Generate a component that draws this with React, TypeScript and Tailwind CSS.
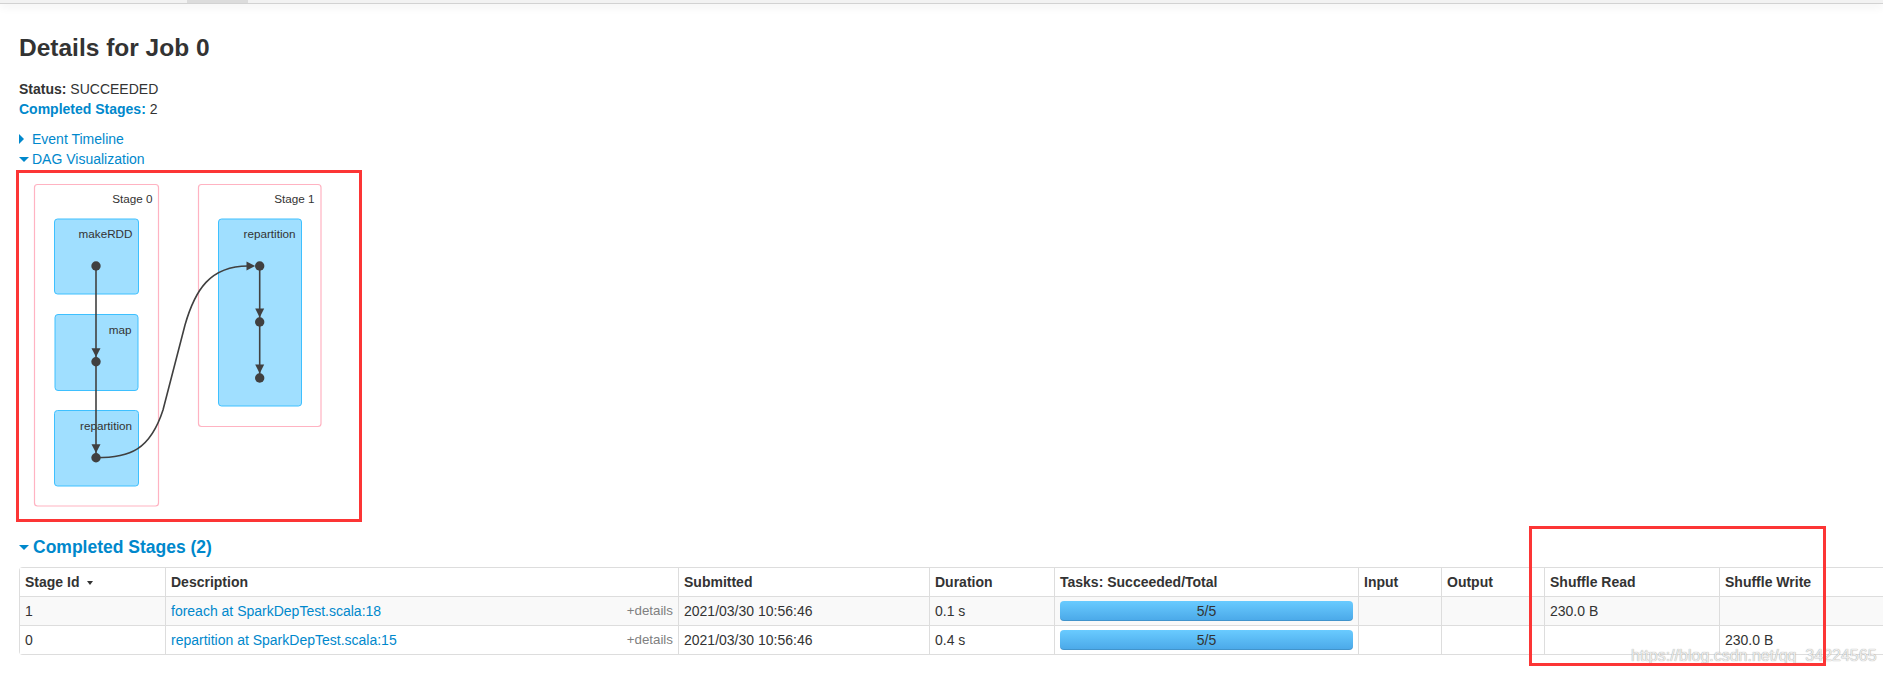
import React from "react";

function DownArrowHead({ x, y }: { x: number; y: number }) {
  // tip at dot edge, pointing down
  return <polygon points={`${x - 4.5},${y - 13.5} ${x + 4.5},${y - 13.5} ${x},${y - 4.6}`} fill="#404040" />;
}

function Dag() {
  const dot = "#404040";
  return (
    <svg width={340} height={346} viewBox="19 173 340 346" className="block">
      {/* stages */}
      <rect x={34.5} y={184.5} width={124} height={321.5} rx={3} fill="#ffffff" stroke="#ffb3c2" strokeWidth={1.2} />
      <text x={152.5} y={203} textAnchor="end" fontSize={11.7} fill="#333" fontFamily="'Liberation Sans', Arial, sans-serif">
        Stage 0
      </text>
      <rect x={198.5} y={184.5} width={122.5} height={242} rx={3} fill="#ffffff" stroke="#ffb3c2" strokeWidth={1.2} />
      <text x={314.5} y={203} textAnchor="end" fontSize={11.7} fill="#333" fontFamily="'Liberation Sans', Arial, sans-serif">
        Stage 1
      </text>

      {/* rdd clusters */}
      <rect x={54.5} y={219} width={84} height={75} rx={3} fill="#a0dfff" stroke="#3ec0ff" strokeWidth={1} />
      <text x={132.5} y={237.7} textAnchor="end" fontSize={11.7} fill="#333" fontFamily="'Liberation Sans', Arial, sans-serif">
        makeRDD
      </text>
      <rect x={55} y={314.5} width={83} height={76} rx={3} fill="#a0dfff" stroke="#3ec0ff" strokeWidth={1} />
      <text x={131.5} y={334} textAnchor="end" fontSize={11.7} fill="#333" fontFamily="'Liberation Sans', Arial, sans-serif">
        map
      </text>
      <rect x={54.5} y={410.5} width={84} height={75.5} rx={3} fill="#a0dfff" stroke="#3ec0ff" strokeWidth={1} />
      <text x={132} y={430} textAnchor="end" fontSize={11.7} fill="#333" fontFamily="'Liberation Sans', Arial, sans-serif">
        repartition
      </text>
      <rect x={218.5} y={219} width={83} height={187} rx={3} fill="#a0dfff" stroke="#3ec0ff" strokeWidth={1} />
      <text x={295.5} y={237.7} textAnchor="end" fontSize={11.7} fill="#333" fontFamily="'Liberation Sans', Arial, sans-serif">
        repartition
      </text>

      {/* edges */}
      <line x1={96} y1={266} x2={96} y2={457.7} stroke="#404040" strokeWidth={1.6} />
      <line x1={259.7} y1={266} x2={259.7} y2={378} stroke="#404040" strokeWidth={1.6} />
      <path
        d="M96,457.7 C130,457.7 150,450 163,410 L185,325 C195,290 210,266 248,266"
        fill="none"
        stroke="#404040"
        strokeWidth={1.6}
      />
      <polygon points="246.5,261.5 246.5,270.5 255.2,266" fill="#404040" />
      <DownArrowHead x={96} y={361.7} />
      <DownArrowHead x={96} y={457.7} />
      <DownArrowHead x={259.7} y={322} />
      <DownArrowHead x={259.7} y={378} />

      {/* nodes */}
      <circle cx={96} cy={266} r={4.7} fill={dot} />
      <circle cx={96} cy={361.7} r={4.7} fill={dot} />
      <circle cx={96} cy={457.7} r={4.7} fill={dot} />
      <circle cx={259.7} cy={266} r={4.7} fill={dot} />
      <circle cx={259.7} cy={322} r={4.7} fill={dot} />
      <circle cx={259.7} cy={378} r={4.7} fill={dot} />
    </svg>
  );
}

function Progress() {
  return (
    <div className="h-[20px] rounded-[4px] bg-linear-to-b from-[#69cbff] to-[#4aa8e8] shadow-[inset_0_-1px_0_rgba(0,0,0,0.12)] text-center leading-[20px] text-[#333]">
      5/5
    </div>
  );
}

export default function App() {
  const th = "px-[5px] py-[4px] leading-[20px] font-bold text-left border-l border-[#ddd] align-top";
  const td = "px-[5px] py-[4px] leading-[20px] text-left border-l border-t border-[#ddd] align-top";
  const rows = [
    { id: "1", desc: "foreach at SparkDepTest.scala:18", dur: "0.1 s", read: "230.0 B", write: "", bg: "bg-[#f9f9f9]" },
    { id: "0", desc: "repartition at SparkDepTest.scala:15", dur: "0.4 s", read: "", write: "230.0 B", bg: "bg-white" },
  ];
  return (
    <div className="relative w-[1883px] h-[677px] overflow-hidden bg-white font-['Liberation_Sans',Arial,sans-serif] text-[14px] leading-[20px] text-[#333]">
      {/* navbar remnant */}
      <div className="relative z-10 flex h-[4px] bg-[#f2f2f2] border-b border-[#d2d2d2] shadow-[0_2px_10px_rgba(0,0,0,0.09)]">
        <div className="w-[187px]" />
        <div className="w-[61px] bg-[#dcdcdc]" />
      </div>

      <div className="pl-[19px]">
        <h3 className="mt-[24px] h-[40px] text-[24.5px] leading-[40px] font-bold text-[#333]">Details for Job 0</h3>

        <div className="mt-[11px]">
          <div>
            <strong>Status:</strong> SUCCEEDED
          </div>
          <div>
            <a className="font-bold text-[#0088cc]">Completed Stages:</a> 2
          </div>
        </div>

        <div className="mt-[10px]">
          <div className="flex items-center h-[20px]">
            <span className="flex w-[13px]">
              <span className="border-y-[5px] border-y-transparent border-l-[5px] border-l-[#0088cc]" />
            </span>
            <span className="text-[#0088cc]">Event Timeline</span>
          </div>
          <div className="flex items-center h-[20px]">
            <span className="flex w-[13px]">
              <span className="border-x-[5px] border-x-transparent border-t-[5px] border-t-[#0088cc]" />
            </span>
            <span className="text-[#0088cc]">DAG Visualization</span>
          </div>
        </div>

        <div className="ml-[-3px] mt-[1px] w-[346px] h-[352px] border-[3px] border-[#fc3535]">
          <Dag />
        </div>

        <h4 className="mt-[15px] flex items-center h-[20px] text-[17.5px] leading-[20px] font-bold text-[#0088cc]">
          <span className="flex w-[14px]">
            <span className="border-x-[5px] border-x-transparent border-t-[5px] border-t-[#0088cc]" />
          </span>
          <span>Completed Stages (2)</span>
        </h4>

        <table className="mt-[10px] w-[1900px] table-fixed border-separate border-spacing-0 border-t border-b border-l border-[#ddd] rounded-l-[4px]">
          <thead>
            <tr className="bg-white">
              <th className={`${th} w-[145px] border-l-0`}>
                Stage Id
                <span className="ml-[8px] inline-block align-middle border-x-[3px] border-x-transparent border-t-[4px] border-t-[#333]" />
              </th>
              <th className={`${th} w-[513px]`}>Description</th>
              <th className={`${th} w-[251px]`}>Submitted</th>
              <th className={`${th} w-[125px]`}>Duration</th>
              <th className={`${th} w-[304px]`}>Tasks: Succeeded/Total</th>
              <th className={`${th} w-[83px]`}>Input</th>
              <th className={`${th} w-[103px]`}>Output</th>
              <th className={`${th} w-[175px]`}>Shuffle Read</th>
              <th className={`${th} w-[200px]`}>Shuffle Write</th>
            </tr>
          </thead>
          <tbody>
            {rows.map((r) => (
              <tr key={r.id} className={r.bg}>
                <td className={`${td} border-l-0`}>{r.id}</td>
                <td className={td}>
                  <span className="float-right text-[13.33px] text-[#808080]">+details</span>
                  <a className="text-[#0088cc]">{r.desc}</a>
                </td>
                <td className={td}>2021/03/30 10:56:46</td>
                <td className={td}>{r.dur}</td>
                <td className={td}>
                  <Progress />
                </td>
                <td className={td}></td>
                <td className={td}></td>
                <td className={td}>{r.read}</td>
                <td className={td}>{r.write}</td>
              </tr>
            ))}
          </tbody>
        </table>
      </div>

      {/* watermark */}
      <div className="absolute left-[1631px] top-[646px] text-[16px] leading-[20px] whitespace-nowrap text-[#ececec] [text-shadow:0_0_1px_rgba(0,0,0,0.45)]">
        https://blog.csdn.net/qq_34224565
      </div>

      {/* annotation box */}
      <div className="absolute left-[1529px] top-[526px] w-[297px] h-[140px] border-[3px] border-[#fc3535]" />
    </div>
  );
}
